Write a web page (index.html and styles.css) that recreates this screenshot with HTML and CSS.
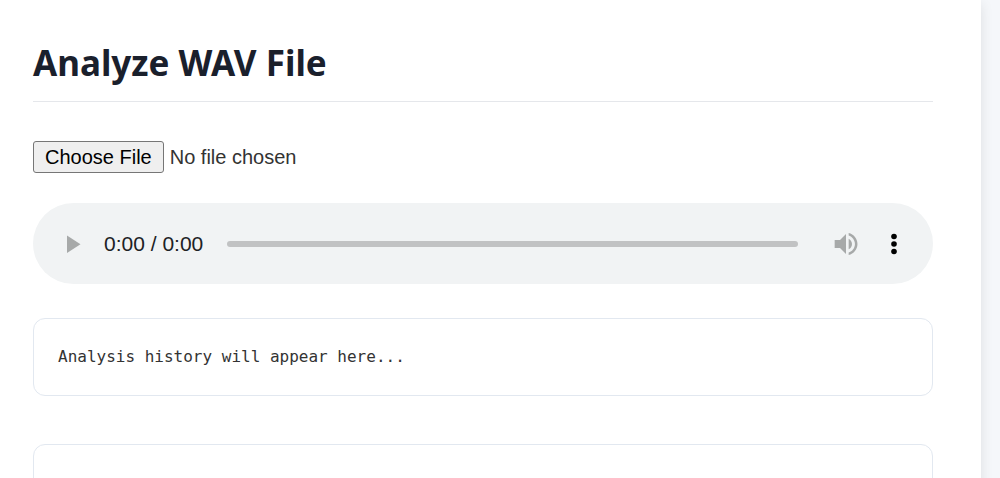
FILE: index.html
```html
<!DOCTYPE html>
<html lang="en">
<head>
<meta charset="utf-8">
<meta name="viewport" content="width=device-width, initial-scale=1">
<title>Analyze WAV File</title>
<link rel="stylesheet" href="styles.css">
</head>
<body>
<main class="panel">
  <h1 class="title">Analyze WAV File</h1>
  <input class="file" type="file" accept=".wav" aria-label="WAV file">
  <div class="player" role="group" aria-label="Audio player">
    <button class="control" type="button" aria-label="Play" disabled>
      <svg class="icon" viewBox="0 0 32 32"><path d="M11 7.500v17.500l13.500-8.750z"/></svg>
    </button>
    <span class="time">0:00 / 0:00</span>
    <input class="seek" type="range" min="0" max="100" value="0" aria-label="Seek" disabled>
    <button class="control" type="button" aria-label="Mute" disabled>
      <svg class="icon" viewBox="0 0 24 24"><path d="M3.500 9v6h4l4.500 4.500V4.500L7.500 9h-4zm13 3c0-1.770-1.020-3.290-2.500-4.030v8.050c1.480-.73 2.500-2.250 2.500-4.020zM14 3.730v1.860c2.690.86 4.700 3.440 4.700 6.410s-2.010 5.550-4.700 6.410v1.860c3.810-.91 6.600-4.190 6.600-8.270s-2.790-7.360-6.600-8.270z"/></svg>
    </button>
    <button class="control menu" type="button" aria-label="More options">
      <svg class="icon" viewBox="0 0 32 32"><circle cx="16" cy="8.500" r="2.800"/><circle cx="16" cy="16" r="2.800"/><circle cx="16" cy="23.500" r="2.800"/></svg>
    </button>
  </div>
  <pre class="card history">Analysis history will appear here...</pre>
  <section class="card results" aria-label="Results"></section>
</main>
</body>
</html>
```
FILE: styles.css
```css
* { box-sizing: border-box; }
html { height: 100%; overflow: hidden; }
body {
  margin: 0;
  min-height: 100%;
  padding-right: 19px;
  background: #f5f7fa;
  color: #333;
  font-family: "Liberation Sans", Arial, sans-serif;
}
.panel {
  display: flex;
  flex-direction: column;
  padding: 36px 48px 0 33px;
  background: #fff;
  box-shadow: 0 4px 12px rgba(0, 0, 0, 0.1);
}
.title {
  margin: 0 0 39px;
  padding-bottom: 12px;
  border-bottom: 1px solid #e5e7eb;
  color: #1a202c;
  font: 700 35px/53px "Noto Sans", "Segoe UI", sans-serif;
}
.file {
  height: 32px;
  margin-bottom: 30px;
  color: #333;
  font: 20px/26px "Liberation Sans", Arial, sans-serif;
}
.file::file-selector-button {
  height: 32px;
  margin-right: 6px;
  padding: 1px 11px;
  border: 1px solid #767676;
  border-radius: 3px;
  background: #efefef;
  color: #000;
  font: inherit;
}
.player {
  display: flex;
  align-items: center;
  height: 81px;
  margin-bottom: 34px;
  padding: 0 23px;
  border-radius: 41px;
  background: #f1f3f4;
}
.control {
  display: flex;
  flex: none;
  padding: 0;
  border: 0;
  background: none;
  color: #a7a9a9;
}
.menu {
  margin-left: 16px;
  color: #000;
}
.icon {
  width: 32px;
  height: 32px;
  fill: currentColor;
}
.time {
  margin: 0 24px 0 16px;
  color: #202124;
  font-size: 21px;
  white-space: nowrap;
}
.seek {
  flex: 1;
  min-width: 0;
  height: 6px;
  margin: 0 32px 0 0;
  border-radius: 3px;
  background: #c1c2c3;
  appearance: none;
}
.seek::-webkit-slider-thumb {
  width: 0;
  height: 0;
  appearance: none;
}
.card {
  border: 1px solid #e2e8f0;
  border-radius: 12px;
}
.history {
  margin: 0 0 48px;
  padding: 24px;
  font: 16px/28px "DejaVu Sans Mono", Consolas, monospace;
  white-space: pre-wrap;
}
.results {
  min-height: 78px;
}
```
